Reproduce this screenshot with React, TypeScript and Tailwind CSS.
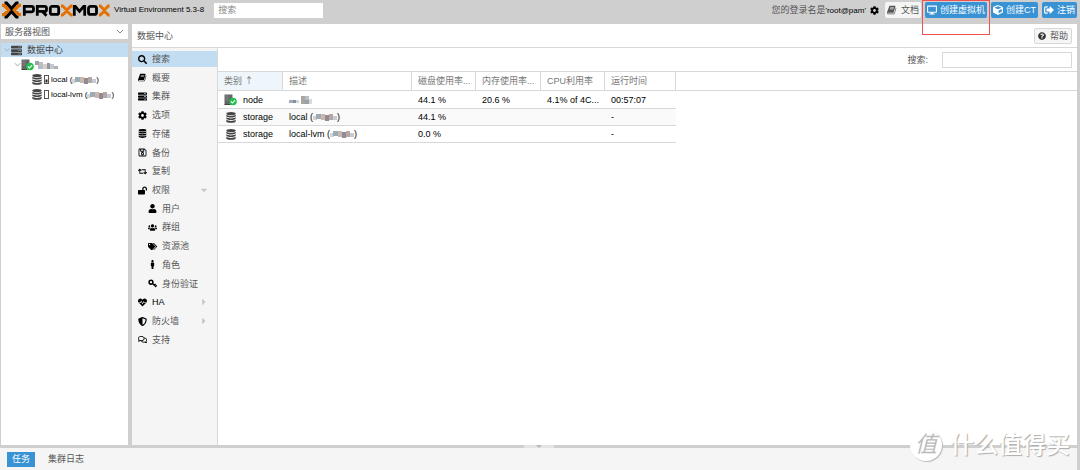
import React from 'react';
import {
  FaCaretDown, FaCaretRight, FaCog, FaCube, FaDesktop, FaHeartbeat, FaLockOpen, FaMale,
  FaQuestionCircle, FaRegComments, FaRegSave, FaRetweet, FaSearch, FaServer, FaShieldAlt,
  FaSignOutAlt, FaTags, FaUser, FaUsers,
} from 'react-icons/fa';

type IconProps = { className?: string };

function Book({ className }: IconProps) {
  return (
    <svg viewBox="0 0 1792 1792" fill="currentColor" className={className} aria-hidden="true">
      <path d="M1639 478q40 57 18 129l-275 906q-19 64-76.5 107.5t-122.5 43.5h-923q-77 0-148.5-53.5t-99.5-131.5q-24-67-2-127 0-4 3-27t4-37q1-8-3-21.5t-3-19.5q2-11 8-21t16.5-23.5 16.5-23.5q23-38 45-91.5t30-91.5q3-10 .5-30t-.5-28q3-11 17-28t17-23q21-36 42-92t25-90q1-9-2.5-32t.5-28q4-13 22-30.5t22-22.5q19-26 42.5-84.5t27.5-96.5q1-8-3-25.5t-2-26.5q2-8 9-18t18-23 17-21q8-12 16.5-30.5t15-35 16-36 19.5-32 26.5-23.5 36-11.5 47.5 5.5l-1 3q38-9 51-9h761q74 0 114 56t18 130l-274 906q-36 119-71.5 153.5t-128.5 34.5h-869q-27 0-38 15-11 16-1 43 24 70 144 70h923q29 0 56-15.5t35-41.5l300-987q7-22 5-57 38 15 59 43zm-1064 2q-4 13 2 22.5t20 9.5h608q13 0 25.5-9.5t16.5-22.5l21-64q4-13-2-22.5t-20-9.5h-608q-13 0-25.5 9.5t-16.5 22.5zm-83 256q-4 13 2 22.5t20 9.5h608q13 0 25.5-9.5t16.5-22.5l21-64q4-13-2-22.5t-20-9.5h-608q-13 0-25.5 9.5t-16.5 22.5z" />
    </svg>
  );
}

function Key({ className }: IconProps) {
  return (
    <svg viewBox="0 0 18 18" fill="none" stroke="currentColor" className={className} aria-hidden="true">
      <circle cx="6" cy="6.500" r="3.800" strokeWidth="3" />
      <path d="M9 9l7.500 7M12.500 12.500l2.800-2.800M15 15l2.500-2.500" strokeWidth="2.400" />
    </svg>
  );
}

function Database({ className }: IconProps) {
  return (
    <svg viewBox="0 0 12 14" fill="currentColor" className={className} aria-hidden="true">
      <ellipse cx="6" cy="2" rx="6" ry="2" />
      <path d="M0 3.6c2 1.9 10 1.9 12 0v1.6c0 2.5-12 2.5-12 0zM0 6.8c2 1.9 10 1.9 12 0v1.6c0 2.5-12 2.5-12 0zM0 10c2 1.9 10 1.9 12 0v1.8c0 2.7-12 2.7-12 0z" />
    </svg>
  );
}

function NodeOnline({ className }: IconProps) {
  return (
    <svg viewBox="0 0 13 12" className={className} aria-hidden="true">
      <path d="M0.5 0.5h8v10h-8z" fill="#666" />
      <path d="M1.5 2h3M1.5 4h3M1.5 6h3" stroke="#999" strokeWidth=".7" />
      <path d="M0.5 10.5h6" stroke="#444" />
      <circle cx="9" cy="7.5" r="3.8" fill="#21bf4b" />
      <path d="M7 7.5l1.5 1.5 2.6-2.8" fill="none" stroke="#fff" strokeWidth="1.1" />
    </svg>
  );
}

function Chevron({ className }: IconProps) {
  return (
    <svg viewBox="0 0 8 6" fill="none" stroke="currentColor" className={className} aria-hidden="true">
      <path d="M1 1l3 3 3-3" />
    </svg>
  );
}

function Logo() {
  return (
    <svg viewBox="0 0 108 18" className="h-[18px] w-[108px] shrink-0" role="img" aria-label="Proxmox">
      <g fill="none" strokeWidth="3.2">
        <path d="M2.500 2h2l5 5.500L14.500 2h2M2.500 16h2l5-5.500 5 5.500h2" stroke="#000" />
        <path d="M0 4.300h2L6.500 9 2 13.700h-2M19 4.300h-2L12.500 9l4.500 4.700h2" stroke="#e57000" />
      </g>
      <g fill="none" strokeWidth="2.800" stroke="#000">
        <path d="M22.300 14.800V5.400h7.200q2 0 2 2v1.400q0 2-2 2h-7" />
        <path d="M35.300 14.800V5.400h7.200q2 0 2 2v1q0 2-2 2h-7M40.500 10.500l4 4.200" />
        <rect x="48.300" y="5.400" width="8.400" height="8" rx="2" />
        <path d="M72.300 14.800V5.400h1l4.200 5 4.200-5h1v9.400" />
        <rect x="86.500" y="5.400" width="8" height="8" rx="2" />
      </g>
      <path d="M59 5h1.500l4.300 4 4.300-4h1.500M59 14h1.500l4.300-4 4.300 4h1.500M97 5h1.300l4 4 4-4h1.300M97 14h1.300l4-4 4 4h1.300" fill="none" stroke="#e57000" strokeWidth="2.900" />
    </svg>
  );
}

type Block = [x: number, y: number, w: number, h: number, fill: string];

const MOSAICS: Record<string, Block[]> = {
  short: [
    [0, 4, 4, 3, '#a9a8b8'], [4, 4, 3, 3, '#8390a0'], [7, 4, 3, 3, '#cfd6dc'], [12, 0, 4, 8, '#a8a69f'],
    [16, 0, 4, 4, '#b9bcc4'], [16, 4, 4, 4, '#9aa0a4'], [20, 3, 3, 5, '#d8dade'],
  ],
  tree: [
    [0, 0, 4, 4, '#9da3aa'], [4, 1, 4, 3, '#c5bdb8'], [3, 4, 5, 4, '#b4bccb'], [8, 3, 4, 5, '#d9cfc4'],
    [12, 2, 3, 6, '#8e99a5'], [15, 3, 4, 5, '#c8c8cc'], [19, 5, 4, 3, '#aab4b8'],
  ],
  name: [
    [0, 3, 4, 4, '#d3d3d3'], [3, 1, 5, 5, '#9dacb4'], [8, 1, 4, 6, '#c9b8ac'], [12, 2, 4, 6, '#8f8c98'],
    [16, 1, 4, 6, '#b9a6a4'], [20, 3, 4, 4, '#c3ccd6'],
  ],
};

function Mosaic({ kind, className }: { kind: string; className: string }) {
  return (
    <svg viewBox="0 0 24 8" className={className} aria-hidden="true">
      {MOSAICS[kind].map(([x, y, width, height, fill], i) => (
        <rect key={i} x={x} y={y} width={width} height={height} fill={fill} />
      ))}
    </svg>
  );
}

type Item = {
  label: string;
  icon: React.ComponentType<IconProps>;
  child?: boolean;
  active?: boolean;
  arrow?: 'down' | 'right';
};

const MENU: Item[] = [
  { label: '搜索', icon: FaSearch, active: true },
  { label: '概要', icon: Book },
  { label: '集群', icon: FaServer },
  { label: '选项', icon: FaCog },
  { label: '存储', icon: Database },
  { label: '备份', icon: FaRegSave },
  { label: '复制', icon: FaRetweet },
  { label: '权限', icon: FaLockOpen, arrow: 'down' },
  { label: '用户', icon: FaUser, child: true },
  { label: '群组', icon: FaUsers, child: true },
  { label: '资源池', icon: FaTags, child: true },
  { label: '角色', icon: FaMale, child: true },
  { label: '身份验证', icon: Key, child: true },
  { label: 'HA', icon: FaHeartbeat, arrow: 'right' },
  { label: '防火墙', icon: FaShieldAlt, arrow: 'right' },
  { label: '支持', icon: FaRegComments },
];

function MenuItem({ item }: { item: Item }) {
  const Icon = item.icon;
  return (
    <li>
      <button
        className={`flex h-4 w-full items-center gap-[5px] pr-2 text-left ${item.child ? 'pl-4' : 'pl-1.5'} ${item.active ? 'bg-[#c2ddf2]' : ''}`}
      >
        <span className="flex w-[9px] justify-center text-black">
          <Icon className="size-[9px] shrink-0" />
        </span>
        <span className={item.label === 'HA' ? 'text-black' : ''}>{item.label}</span>
        {item.arrow === 'down' && <FaCaretDown className="ml-auto size-[10px] text-[#c8c8c8]" />}
        {item.arrow === 'right' && <FaCaretRight className="ml-auto size-[10px] text-[#c8c8c8]" />}
      </button>
    </li>
  );
}

function BlueButton({ icon: Icon, label }: { icon: React.ComponentType<IconProps>; label: string }) {
  return (
    <button className="flex h-4 items-center gap-[3px] rounded-xs bg-[#3892d4] px-[2px] text-white">
      <Icon className="size-[10px]" />
      {label}
    </button>
  );
}

const HEAD_CELL = 'whitespace-nowrap border-r border-b border-[#d8d8d8] pr-px pl-1.5 text-left font-normal';
const CELL = 'whitespace-nowrap border-b border-[#d8d8d8] pr-px pl-1.5 text-black';

type Row = { type: string; desc: string; disk: string; mem: string; cpu: string; uptime: string };

const ROWS: Row[] = [
  { type: 'node', desc: '', disk: '44.1 %', mem: '20.6 %', cpu: '4.1% of 4C...', uptime: '00:57:07' },
  { type: 'storage', desc: 'local', disk: '44.1 %', mem: '', cpu: '', uptime: '-' },
  { type: 'storage', desc: 'local-lvm', disk: '0.0 %', mem: '', cpu: '', uptime: '-' },
];

function Masked({ desc }: { desc: string }) {
  if (!desc) return <Mosaic kind="short" className="h-2 w-6" />;
  return (
    <span className="flex items-center text-black">
      {desc} (
      <Mosaic kind="name" className="h-2 w-6" />)
    </span>
  );
}

function ResourceTable() {
  return (
    <table className="w-full table-fixed border-separate border-spacing-0">
      <colgroup>
        <col className="w-[65px]" />
        <col className="w-[129px]" />
        <col className="w-16" />
        <col className="w-[65px]" />
        <col className="w-16" />
        <col className="w-[71px]" />
        <col />
      </colgroup>
      <thead>
        <tr className="h-[19px] text-[#777]">
          <th className={`${HEAD_CELL} bg-[#eef5fb]`}>
            类别 <span className="font-['Noto_Sans_CJK_SC',sans-serif]">↑</span>
          </th>
          <th className={HEAD_CELL}>描述</th>
          <th className={HEAD_CELL}>磁盘使用率...</th>
          <th className={HEAD_CELL}>内存使用率...</th>
          <th className={HEAD_CELL}>CPU利用率</th>
          <th className={HEAD_CELL}>运行时间</th>
          <th className="border-b border-[#d8d8d8]" />
        </tr>
      </thead>
      <tbody>
        {ROWS.map((row, i) => (
          <tr key={i} className={`${row.type === 'node' ? 'h-[18px]' : 'h-[17px]'} ${i === 1 ? 'bg-[#fafafa]' : ''}`}>
            <td className={CELL}>
              <span className="flex items-center gap-1.5">
                {row.type === 'node' ? (
                  <NodeOnline className="h-3 w-[13px]" />
                ) : (
                  <span className="flex w-[13px] justify-center"><Database className="h-[11px] w-[10px] text-[#444]" /></span>
                )}
                {row.type}
              </span>
            </td>
            <td className={CELL}><Masked desc={row.desc} /></td>
            <td className={CELL}>{row.disk}</td>
            <td className={CELL}>{row.mem}</td>
            <td className={CELL}>{row.cpu}</td>
            <td className={CELL}>{row.uptime}</td>
            <td className="bg-white" />
          </tr>
        ))}
      </tbody>
    </table>
  );
}

function Tree() {
  return (
    <ul className="text-[8px] leading-3 text-black">
      <li className="flex h-3.5 items-center gap-px bg-[#c2ddf2] pl-[3px]">
        <Chevron className="h-1.5 w-[6px] text-[#999]" />
        <FaServer className="size-[11px] text-[#444]" />
        <span className="pl-1 text-[9px] text-[#444]">数据中心</span>
      </li>
      <li className="flex h-[15px] items-center pl-[13px]">
        <Chevron className="h-1.5 w-[7px] text-[#999]" />
        <NodeOnline className="h-3 w-[13px]" />
        <Mosaic kind="tree" className="ml-px h-2 w-6" />
      </li>
      {['local', 'local-lvm'].map((name, i) => (
        <li key={name} className="flex h-[15px] items-center pl-[31px]">
          <Database className="h-[11px] w-[10px] text-[#444]" />
          <svg viewBox="0 0 5 9" className="mx-[2px] h-[9px] w-[5px]" aria-hidden="true">
            <rect x=".5" y=".5" width="4" height="8" fill="#fff" stroke="#555" />
            {i === 0 && <rect x="1.500" y="4.500" width="2" height="3" fill="#222" />}
          </svg>
          <Masked desc={name} />
        </li>
      ))}
    </ul>
  );
}

function Watermark() {
  return (
    <div className="pointer-events-none absolute right-[10px] bottom-[9px] flex items-center gap-2 text-white">
      <span className="flex size-8 items-center justify-center rounded-full bg-white text-[22px] leading-none text-[#bbb] italic shadow-[1px_1px_1px_#bbb]">值</span>
      <span className="text-[24px] leading-8 font-medium [text-shadow:1px_1px_1px_#aaa]">什么值得买</span>
    </div>
  );
}

export default function App() {
  return (
    <div className="relative flex h-screen flex-col bg-[#cfcfcf] pr-[3px] font-['Liberation_Sans','Noto_Sans_CJK_SC',sans-serif] text-[9px] leading-3 text-[#555]">
      <header className="flex h-6 shrink-0 items-center pb-1 pl-0.5">
        <Logo />
        <span className="pl-1 text-[8px] text-black">Virtual Environment 5.3-8</span>
        <input aria-label="搜索" placeholder="搜索" className="ml-2.5 h-[15px] w-[109px] bg-white px-1 placeholder:text-[#888]" />
        <div className="ml-auto flex items-center gap-1">
          <span>您的登录名是<span className="text-[8px] text-black">'root@pam'</span></span>
          <FaCog className="mr-0.5 size-[9px] text-black" />
          <button className="flex h-4 items-center gap-1 rounded-xs bg-[#f5f5f5] px-[2px]">
            <Book className="size-[10px]" />文档
          </button>
          <div className="relative">
            <BlueButton icon={FaDesktop} label="创建虚拟机" />
            <span className="pointer-events-none absolute -top-[2px] -right-[3px] h-[35px] w-[68px] border border-[#f05050]" />
          </div>
          <BlueButton icon={FaCube} label="创建CT" />
          <BlueButton icon={FaSignOutAlt} label="注销" />
        </div>
      </header>

      <div className="flex min-h-0 flex-1 gap-1 pl-px">
        <aside className="flex w-[127px] shrink-0 flex-col">
          <div className="relative">
            <select aria-label="视图" className="h-[15px] w-full appearance-none bg-white px-1">
              <option>服务器视图</option>
            </select>
            <Chevron className="pointer-events-none absolute top-[5px] right-1 h-1.5 w-2 text-[#888]" />
          </div>
          <nav className="mt-1 flex-1 bg-white"><Tree /></nav>
        </aside>

        <main className="flex min-w-0 flex-1 flex-col bg-white">
          <div className="flex h-6 shrink-0 items-center justify-between border-b border-[#d8d8d8] px-[5px]">
            <h1>数据中心</h1>
            <button className="flex h-4 items-center gap-1 rounded-xs border border-[#d8d8d8] bg-[#f5f5f5] px-[3px]">
              <FaQuestionCircle className="size-2 text-[#333]" />帮助
            </button>
          </div>
          <div className="flex min-h-0 flex-1">
            <nav className="w-[86px] shrink-0 border-r border-[#d8d8d8] bg-[#f5f5f5] pt-[3px]">
              <ul className="flex h-[297px] flex-col justify-between">
                {MENU.map((item) => <MenuItem key={item.label} item={item} />)}
              </ul>
            </nav>
            <section className="min-w-0 flex-1">
              <div className="flex h-6 items-center justify-end border-b border-[#d8d8d8] pr-[5px]">
                <label htmlFor="filter" className="pr-[14px]">搜索:</label>
                <input id="filter" className="h-4 w-[130px] border border-[#d8d8d8] bg-white px-1" />
              </div>
              <ResourceTable />
            </section>
          </div>
        </main>
      </div>

      <div className="flex h-[3px] shrink-0 justify-center">
        <button aria-label="折叠" className="flex h-[3px] w-[30px] items-center justify-center bg-[#e4e4e4]">
          <svg viewBox="0 0 6 3" className="h-[3px] w-1.5" aria-hidden="true">
            <path d="M0 0h6L3 3z" fill="#bbb" />
          </svg>
        </button>
      </div>
      <footer className="flex h-[22px] shrink-0 items-center gap-[13px] bg-[#f5f5f5] pl-[7px]">
        <button className="h-[15px] bg-[#3892d4] px-[5px] text-white">任务</button>
        <button>集群日志</button>
      </footer>
      <Watermark />
    </div>
  );
}
